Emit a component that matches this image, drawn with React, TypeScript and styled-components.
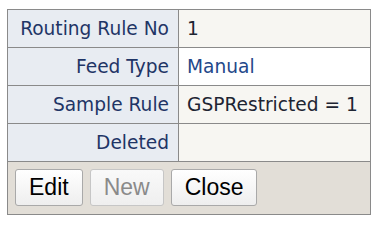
import React from "react";
import styled, { createGlobalStyle } from "styled-components";

const GlobalStyle = createGlobalStyle`
  html, body {
    margin: 0;
    padding: 0;
    background: #ffffff;
  }
`;

const Page = styled.div`
  padding: 9px 0 0 7px;
`;

const Panel = styled.div`
  width: 364px;
  box-sizing: border-box;
  border: 1px solid #8a8a8a;
  font-family: "DejaVu Sans", Verdana, sans-serif;
  font-size: 18.6px;
`;

const Grid = styled.div`
  display: grid;
  grid-template-columns: 171px 1fr;
`;

const Label = styled.div`
  box-sizing: border-box;
  height: 38px;
  display: flex;
  align-items: center;
  justify-content: flex-end;
  padding-right: 9px;
  background: #e8ecf2;
  color: #1f3566;
  border-right: 1px solid #8a8a8a;
  border-bottom: 1px solid #8a8a8a;
  white-space: nowrap;
`;

const Value = styled.div<{ $tone?: "dark" | "blue"; $white?: boolean }>`
  box-sizing: border-box;
  height: 38px;
  display: flex;
  align-items: center;
  padding-left: 8px;
  background: ${(p) => (p.$white ? "#ffffff" : "#f7f6f2")};
  color: ${(p) => (p.$tone === "blue" ? "#24488a" : "#1e2533")};
  border-bottom: 1px solid #8a8a8a;
  white-space: nowrap;
`;

const ButtonBar = styled.div`
  height: 52px;
  box-sizing: border-box;
  padding: 7px 0 0 7px;
  background: #e2ded7;
  display: flex;
  align-items: flex-start;
  gap: 7px;
`;

const Button = styled.button`
  height: 37px;
  padding: 0 13px;
  font-family: "Liberation Sans", Arial, sans-serif;
  font-size: 23px;
  color: #000000;
  background: linear-gradient(#ffffff, #eeeeee);
  border: 1px solid #a9a9a9;
  border-radius: 3px;
  cursor: pointer;

  &:disabled {
    color: #8a8a8a;
    border-color: #c6c6c6;
    background: linear-gradient(#f9f9f9, #efefef);
    cursor: default;
  }
`;

const rows: { label: string; value: string; tone?: "dark" | "blue"; white?: boolean }[] = [
  { label: "Routing Rule No", value: "1" },
  { label: "Feed Type", value: "Manual", tone: "blue", white: true },
  { label: "Sample Rule", value: "GSPRestricted = 1" },
  { label: "Deleted", value: "" },
];

export default function App() {
  return (
    <>
      <GlobalStyle />
      <Page>
        <Panel>
          <Grid>
            {rows.map((r) => (
              <React.Fragment key={r.label}>
                <Label>{r.label}</Label>
                <Value $tone={r.tone} $white={r.white}>
                  {r.value}
                </Value>
              </React.Fragment>
            ))}
          </Grid>
          <ButtonBar>
            <Button>Edit</Button>
            <Button disabled>New</Button>
            <Button>Close</Button>
          </ButtonBar>
        </Panel>
      </Page>
    </>
  );
}
